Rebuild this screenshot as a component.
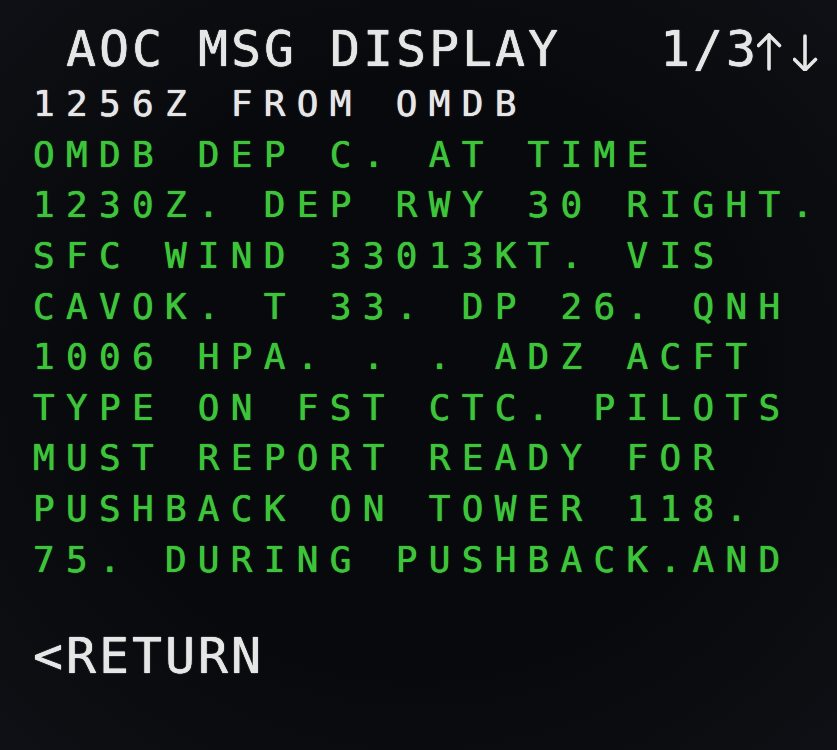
const small = "h-[50.6px] text-[36px] leading-[50.6px] tracking-[11.3px]";
const large = "h-[50.6px] text-[50px] leading-[41px] tracking-[2.9px]";
const glow = "[text-shadow:0_0_0.6px_currentColor,0_0_1.2px_currentColor]";

const message = [
  "OMDB DEP C. AT TIME",
  "1230Z. DEP RWY 30 RIGHT.",
  "SFC WIND 33013KT. VIS",
  "CAVOK. T 33. DP 26. QNH",
  "1006 HPA. . . ADZ ACFT",
  "TYPE ON FST CTC. PILOTS",
  "MUST REPORT READY FOR",
  "PUSHBACK ON TOWER 118.",
  "75. DURING PUSHBACK.AND",
];

function Arrow({ down }: { down?: boolean }) {
  return (
    <svg width="33" height="38" viewBox="0 0 33 38" className="inline-block">
      <g
        fill="none"
        stroke="currentColor"
        strokeWidth="3.6"
        strokeLinecap="round"
        strokeLinejoin="round"
        transform={down ? "rotate(180 12 19.5)" : undefined}
      >
        <path d="M12 2 V36" />
        <path d="M1.5 12.5 L12 2 L22.5 12.5" />
      </g>
    </svg>
  );
}

export default function App() {
  return (
    <div
      className="h-[750px] w-[837px] overflow-hidden bg-[radial-gradient(ellipse_at_center,#08090c_55%,#0e1015_100%)] pl-[33px] pt-[28.6px]"
      style={{ fontFamily: '"DejaVu Sans Mono", "Liberation Mono", monospace' }}
    >
      {/* title */}
      <div className={`${large} ${glow} whitespace-pre text-[#e6e6e6]`}>
        {" AOC MSG DISPLAY   1/3"}
        <span className="tracking-normal">
          <span className="ml-[-2px]">
            <Arrow />
          </span>
          <span className="ml-[3px]">
            <Arrow down />
          </span>
        </span>
      </div>

      <div className={`${small} ${glow} whitespace-pre text-[#e6e6e6]`}>1256Z FROM OMDB</div>

      {message.map((line) => (
        <div key={line} className={`${small} ${glow} whitespace-pre text-[#3dc43a]`}>
          {line}
        </div>
      ))}

      <div className={small} />

      <div className={`${large} ${glow} whitespace-pre text-[#e6e6e6]`}>{"<RETURN"}</div>

      {/* scratchpad */}
      <div className={small} />
    </div>
  );
}
